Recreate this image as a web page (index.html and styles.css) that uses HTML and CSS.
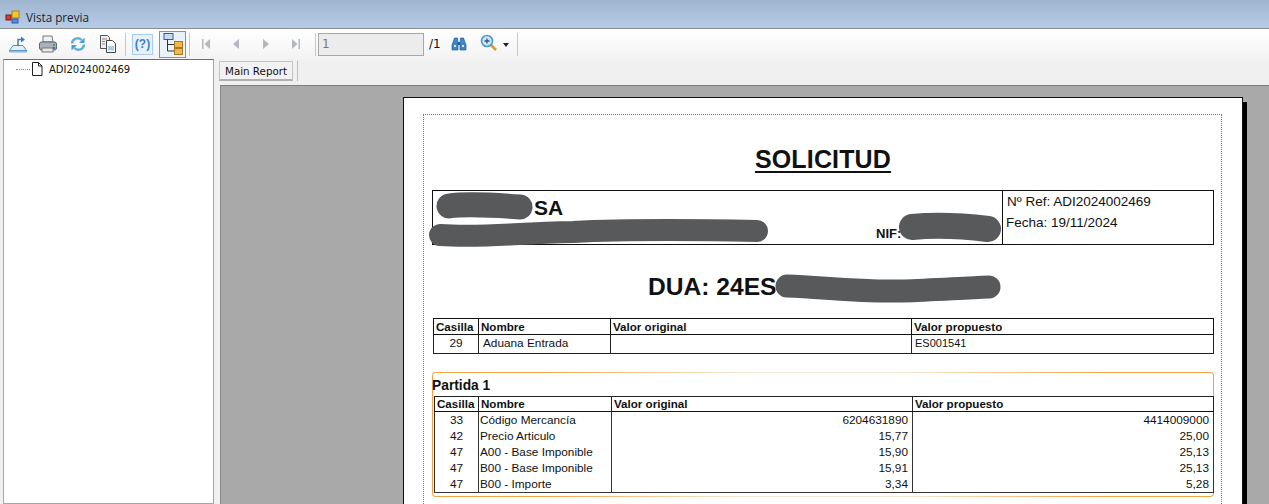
FILE: index.html
```html
<!DOCTYPE html>
<html lang="es">
<head>
<meta charset="utf-8">
<title>Vista previa</title>
<link rel="stylesheet" href="styles.css">
</head>
<body>
<header class="titlebar">
  <svg class="appicon" width="16" height="16" viewBox="0 0 16 16"><rect x="7" y="2" width="7" height="7" fill="#f6c52e" stroke="#a9801a"/><rect x="1" y="6" width="5" height="5" fill="#d8392b" stroke="#7d1f17"/><rect x="7" y="10" width="6" height="4" fill="#4f8fe0" stroke="#2c5fa8"/><path d="M6 8.5h1M9 9v1" stroke="#777"/></svg>
  <span>Vista previa</span>
</header>
<nav class="toolbar">
  <span class="tool"><svg width="20" height="20" viewBox="0 0 20 20"><path d="M1.5 16.500l3.500-5h10l3.500 5z" fill="#e3eff9" stroke="#4d8fc2"/><path d="M1.500 16.500h17v1.500h-17z" fill="#b5d4ec" stroke="#4d8fc2" stroke-width=".7"/><path d="M10 12V5.500h3" fill="none" stroke="#3a7fb5" stroke-width="1.500"/><path d="M13 2.500l4 3-4 3z" fill="#3a7fb5"/></svg></span>
  <span class="tool"><svg width="20" height="20" viewBox="0 0 20 20"><path d="M5 2h9l1 6H5z" fill="#f2f2f2" stroke="#777"/><rect x="1.500" y="8" width="17" height="8" rx="2" fill="#a9b1bb" stroke="#5c6670"/><rect x="4" y="14" width="11" height="4" fill="#e8e8e8" stroke="#777"/><rect x="15" y="10" width="2" height="2" fill="#3aa655"/><rect x="15" y="13" width="2" height="2" fill="#2f6fd0"/></svg></span>
  <span class="tool"><svg width="18" height="18" viewBox="0 0 18 18"><g fill="none" stroke="#62aedb" stroke-width="2.400"><path d="M3 8.500A5.500 5.500 0 0 1 12.500 5"/><path d="M15 9.500A5.500 5.500 0 0 1 5.500 13"/></g><path d="M15.500 2.500v5.500h-5.500zM2.500 15.500V10h5.500z" fill="#4a9bcf"/></svg></span>
  <span class="tool"><svg width="20" height="20" viewBox="0 0 20 20"><path d="M2.500 1.500h7l2 2v11h-9z" fill="#eee" stroke="#555"/><path d="M8.500 6.500h6l3 3v9h-9z" fill="#fff" stroke="#444"/><path d="M4 5h5M4 7.500h3M4 10h3" stroke="#888"/><rect x="10" y="12" width="6" height="4.500" fill="#a8cdea"/></svg></span>
  <i class="sep"></i>
  <span class="tool-help">(?)</span>
  <span class="tool-tree"><svg width="24" height="24" viewBox="0 0 24 24"><rect x="3" y="1.500" width="9" height="6" fill="#c9dcf2" stroke="#3b5f8f"/><path d="M6.500 7.500V19H13M6.500 12.500H13" fill="none" stroke="#333"/><rect x="13.500" y="9.500" width="8" height="6" fill="#f4b84a" stroke="#a87a20"/><rect x="13.500" y="16.500" width="8" height="6" fill="#f4b84a" stroke="#a87a20"/></svg></span>
  <i class="sep sep-tree"></i>
  <span class="tool"><svg width="10" height="12" viewBox="0 0 10 12"><path d="M1 1h1.500v10H1zM9 1v10L3.500 6z" fill="#b4b9bf"/></svg></span>
  <span class="tool"><svg width="10" height="12" viewBox="0 0 10 12"><path d="M8 1v10L2 6z" fill="#b4b9bf"/></svg></span>
  <span class="tool"><svg width="10" height="12" viewBox="0 0 10 12"><path d="M2 1v10l6-5z" fill="#b4b9bf"/></svg></span>
  <span class="tool"><svg width="10" height="12" viewBox="0 0 10 12"><path d="M1 1v10l5.500-5zM7.500 1H9v10H7.500z" fill="#b4b9bf"/></svg></span>
  <i class="sep sep-nav"></i>
  <span class="pagebox">1</span>
  <span class="pagecount">/1</span>
  <svg class="binoculars" width="16" height="14" viewBox="0 0 16 14"><path d="M3.500 1h3l.5 5v7H1V8zM9.500 1h3L15 8v5H9V6z" fill="#3f86c6" stroke="#1f5f9a" stroke-width=".7"/><path d="M7 5h2v3H7z" fill="#1f5f9a"/><path d="M3 9h2M11 9h2" stroke="#cfe6f7" stroke-width="2"/></svg>
  <svg class="zoomicon" width="18" height="18" viewBox="0 0 18 18"><path d="M10.500 10.500l5.500 5.500" stroke="#d89a3a" stroke-width="2.600"/><circle cx="7" cy="7" r="5.500" fill="#cfe6f7" stroke="#4b9ad4" stroke-width="1.600"/><path d="M4.500 7h5M7 4.500v5" stroke="#23598f" stroke-width="1.300"/></svg>
  <i class="caret"></i>
  <i class="sep sep-end"></i>
</nav>
<main class="workspace">
  <aside class="treepane">
    <div class="treeitem">
      <i class="dots"></i>
      <svg width="12" height="14" viewBox="0 0 12 14"><path d="M1.500 .5h6l3.500 3.500v9.500h-9.500z" fill="#fff" stroke="#222"/><path d="M7.500 .5V4H11" fill="none" stroke="#222"/></svg>
      <span>ADI2024002469</span>
    </div>
  </aside>
  <section class="viewer">
    <div class="tabstrip"><span class="tab">Main Report</span><i class="tabsep"></i></div>
    <div class="canvas">
      <article class="page">
        <div class="printarea">
          <h1 class="doc-title">SOLICITUD</h1>
          <div class="company">
            <div class="company-main">
              <div class="company-name">SA</div>
              <div class="company-nif">NIF:</div>
            </div>
            <div class="company-ref">
              <div>Nº Ref: ADI2024002469</div>
              <div class="ref-date">Fecha: 19/11/2024</div>
            </div>
          </div>
          <h2 class="dua">DUA: 24ES</h2>
          <table class="grid grid-top">
            <thead><tr><th class="c-box">Casilla</th><th class="c-name">Nombre</th><th class="c-orig">Valor original</th><th>Valor propuesto</th></tr></thead>
            <tbody><tr><td class="center">29</td><td class="pad">Aduana Entrada</td><td></td><td class="tight">ES001541</td></tr></tbody>
          </table>
          <div class="partida">
            <div class="partida-title">Partida 1</div>
            <table class="grid grid-items">
              <thead><tr><th class="c-box2">Casilla</th><th class="c-name2">Nombre</th><th class="c-orig">Valor original</th><th>Valor propuesto</th></tr></thead>
              <tbody>
                <tr><td class="center">33</td><td>Código Mercancía</td><td class="num">6204631890</td><td class="num">4414009000</td></tr>
                <tr><td class="center">42</td><td>Precio Articulo</td><td class="num">15,77</td><td class="num">25,00</td></tr>
                <tr><td class="center">47</td><td>A00 - Base Imponible</td><td class="num">15,90</td><td class="num">25,13</td></tr>
                <tr><td class="center">47</td><td>B00 - Base Imponible</td><td class="num">15,91</td><td class="num">25,13</td></tr>
                <tr><td class="center">47</td><td>B00 - Importe</td><td class="num">3,34</td><td class="num">5,28</td></tr>
              </tbody>
            </table>
          </div>
        </div>
        <svg class="redactions" width="839" height="210" viewBox="0 0 839 210" aria-hidden="true">
          <g fill="none" stroke="#58595b" stroke-linecap="round" stroke-linejoin="round">
            <path d="M46 109C60 107 90 108 117 110" stroke-width="25"/>
            <path d="M37 138C80 141 110 136 170 135C230 132 300 133 354 134" stroke-width="22"/>
            <path d="M509 130C530 128 560 129 585 132" stroke-width="26"/>
            <path d="M384 189C420 190 450 195 500 194C530 193 560 191 586 190" stroke-width="23"/>
          </g>
        </svg>
      </article>
    </div>
  </section>
</main>
</body>
</html>
```

FILE: styles.css
```css
* { box-sizing: border-box; }
html, body { margin: 0; height: 504px; overflow: hidden; }
body { display: flex; flex-direction: column; background: #f0f0f0; font-family: "DejaVu Sans", sans-serif; color: #111; }

.titlebar { height: 29px; flex: none; display: flex; align-items: center; padding: 5px 0 0 5px; gap: 5px; background: linear-gradient(#9fb4cf, #b6cce7); border-bottom: 1px solid #8c8f92; font: 11.700px "Open Sans", sans-serif; color: #1c2530; }

.toolbar { height: 30px; flex: none; display: flex; align-items: center; padding-left: 3px; background: linear-gradient(#fff, #f3f3f3); }
.tool { width: 30px; height: 24px; display: flex; align-items: center; justify-content: center; }
.sep { width: 1px; height: 23px; margin: 0 6px 0 2px; background: #c9c9c9; flex: none; }
.sep-tree { margin: 0 1px 0 3px; }
.sep-nav { margin: 0 2px 0 4px; }
.sep-end { margin: 0 0 0 8px; }
.tool-help { width: 21px; height: 21px; display: flex; align-items: center; justify-content: center; background: #e6f1fc; border: 1px solid #a9cdf0; color: #3f7fc4; font: bold 12px "Liberation Sans", sans-serif; }
.tool-tree { width: 27px; height: 27px; margin-left: 6px; display: flex; align-items: center; justify-content: center; background: #eaf3fc; border: 1px solid #5a9be0; }
.pagebox { width: 106px; height: 23px; padding: 1px 0 0 3px; background: #ececec; border: 1px solid #a8a8a8; color: #777; font-size: 12px; line-height: 19px; }
.pagecount { margin-left: 5px; width: 12px; font: 12px "DejaVu Sans", sans-serif; }
.binoculars { margin-left: 10px; }
.zoomicon { margin-left: 13px; margin-top: -2px; }
.caret { width: 0; height: 0; margin-left: 5px; margin-top: 2px; border: 3px solid transparent; border-top: 4px solid #222; border-bottom: 0; }

.workspace { flex: 1; min-height: 0; display: flex; padding-left: 3px; }
.treepane { width: 211px; flex: none; background: #fff; border: 1px solid #a6a6a6; border-top-color: #6d6d6d; padding-top: 1px; }
.treeitem { display: flex; align-items: center; height: 16px; padding-left: 12px; font-size: 10px; }
.dots { width: 14px; border-top: 1px dotted #888; }
.treeitem svg { margin: 0 6px 0 1px; }

.viewer { flex: 1; min-width: 0; display: flex; flex-direction: column; margin-left: 5px; }
.tabstrip { height: 26px; flex: none; display: flex; align-items: flex-start; padding-top: 2px; }
.tab { width: 74px; height: 20px; background: #f2f2f2; border: 1px solid #c4c4c4; border-bottom: 2px solid #b0b0b0; font-size: 10.300px; line-height: 18px; text-align: center; }
.tabsep { width: 1px; height: 20px; margin-left: 4px; background: #bdbdbd; }

.canvas { flex: 1; min-height: 0; overflow: hidden; margin-left: 1px; padding: 11px 0 0 182px; background: #a9a9a9; border-top: 1px solid #7e7e7e; border-left: 1px solid #8a8a8a; }
.page { position: relative; width: 840px; height: 500px; padding: 16px 20px 0 19px; background: #fff; border: 1px solid #111; box-shadow: 4px 5px 0 #000; font-family: "Liberation Sans", sans-serif; }
.printarea { height: 480px; border: 1px dotted #777; padding: 0 7px 0 8px; }

.doc-title { height: 75px; margin: 0; padding-top: 28px; text-align: center; font-size: 25px; line-height: 33px; letter-spacing: .15px; font-weight: bold; text-decoration: underline; text-underline-offset: 3px; }
.company { height: 55px; display: flex; border: 1px solid #111; }
.company-main { flex: 1; padding-left: 101px; }
.company-name { font-size: 21px; font-weight: bold; line-height: 32px; padding-top: 1px; }
.company-nif { margin: -3px 0 0 342px; font-size: 13px; font-weight: bold; line-height: 20px; padding-top: 3px; }
.company-ref { width: 211px; flex: none; border-left: 1px solid #111; padding: 2px 0 0 4px; font-size: 13.500px; line-height: 18px; }
.ref-date { margin-top: 3px; margin-left: -1px; }
.dua { height: 73px; margin: 0; padding: 26px 0 0 216px; font-size: 24.600px; line-height: 32px; font-weight: bold; }

.grid { border-collapse: collapse; table-layout: fixed; font-size: 11.800px; }
.grid th { font-size: 11.600px; text-align: left; padding: 0 0 0 2px; line-height: 14px; white-space: nowrap; overflow: hidden; }
.grid td { padding: 0 0 0 1px; white-space: nowrap; }
.grid-top { width: 781px; margin-left: 1px; border: 1px solid #111; }
.grid-top th { height: 16px; border: 1px solid #111; }
.grid-top td { height: 19px; padding-bottom: 3px; border: 1px solid #222; }
.grid-top .pad { padding-left: 4px; }
.grid-top .tight { padding-left: 3px; font-size: 11px; }
.c-box { width: 45px; }
.c-name { width: 132px; }
.c-orig { width: 301px; }
.c-box2 { width: 44px; }
.c-name2 { width: 133px; }
.center { text-align: center; }
.grid .num { text-align: right; padding-right: 4px; }
.grid .center { padding-left: 0; }

.partida { height: 125px; margin-top: 18px; padding: 0 0 0 1px; border: 1px solid transparent; border-radius: 4px; background: linear-gradient(#fff, #fff) padding-box, linear-gradient(90deg, #f5a347 0, #f5a347 14%, #f4ead9 40%, #f4ead9 60%, #f5a347 86%, #f5a347 100%) border-box; }
.partida-title { height: 23px; margin-left: -2px; font-size: 13.800px; font-weight: bold; line-height: 26px; }
.grid-items { width: 780px; border: 1px solid #333; border-top-color: #222; }
.grid-items th { height: 14px; border: 1px solid #222; border-bottom-color: #111; }
.grid-items td { height: 16px; line-height: 16px; border-left: 1px solid #333; border-right: 1px solid #333; }
.redactions { position: absolute; left: -1px; top: -1px; }
```
